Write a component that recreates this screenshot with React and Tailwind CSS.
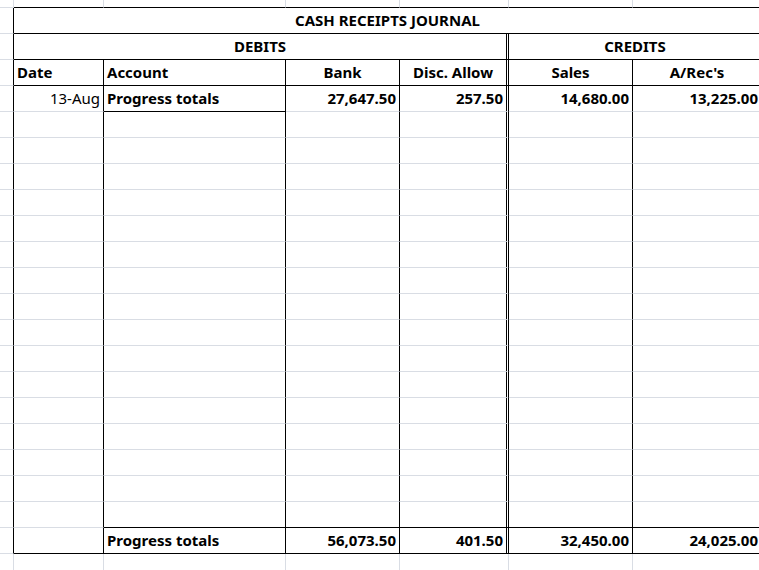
const GRAY = 'border-[#d9dde4]'
const COLS = 'grid-cols-[14px_90px_182px_114px_109px_124px_129px]'

function Cell({ cls = '', children, span = '' }) {
    return (
        <div className={`box-border h-full border-r border-b flex items-center px-[3px] overflow-hidden whitespace-nowrap ${span} ${cls}`}>
            {children}
        </div>
    )
}

// right border per data column: Date, Account, Bank, Disc (double), Sales, A/Rec
const RB = ['border-r-black', 'border-r-black', 'border-r-black', 'border-r-[3px] border-r-black border-double', 'border-r-black', 'border-r-black']

function Row({ h = 'h-[26px]', children }) {
    return <div className={`grid ${COLS} ${h}`}>{children}</div>
}

function BodyRow({ values = [], bottomBlack = [] }) {
    return (
        <Row>
            <Cell cls={`${GRAY} border-r-black`} />
            {RB.map((rb, i) => (
                <Cell key={i} cls={`${GRAY} ${rb} ${bottomBlack.includes(i) ? 'border-b-black' : ''} ${values[i]?.cls || ''}`}>
                    {values[i]?.text}
                </Cell>
            ))}
        </Row>
    )
}

export default function App() {
    const blanks = Array.from({ length: 16 })
    return (
        <div className="w-[759px] h-[570px] overflow-hidden bg-white text-black font-['Lato','Liberation_Sans',sans-serif] text-[15px]">
            <div className="w-[762px]">
                {/* top partial row */}
                <Row h="h-[8px]">
                    <Cell cls={GRAY} />
                    {RB.map((_, i) => <Cell key={i} cls={`${GRAY} border-b-black`} />)}
                </Row>

                {/* Title */}
                <Row>
                    <Cell cls={`${GRAY} border-r-black`} />
                    <Cell span="col-span-6" cls="border-black justify-center font-bold">CASH RECEIPTS JOURNAL</Cell>
                </Row>

                {/* Debits / Credits */}
                <Row>
                    <Cell cls={`${GRAY} border-r-black`} />
                    <Cell span="col-span-4" cls="border-b-black border-r-[3px] border-r-black border-double justify-center font-bold">DEBITS</Cell>
                    <Cell span="col-span-2" cls="border-black justify-center font-bold">CREDITS</Cell>
                </Row>

                {/* Column headers */}
                <BodyRow
                    bottomBlack={[0, 1, 2, 3, 4, 5]}
                    values={[
                        { text: 'Date', cls: 'font-bold' },
                        { text: 'Account', cls: 'font-bold' },
                        { text: 'Bank', cls: 'font-bold justify-center' },
                        { text: 'Disc. Allow', cls: 'font-bold justify-center' },
                        { text: 'Sales', cls: 'font-bold justify-center' },
                        { text: "A/Rec's", cls: 'font-bold justify-center' },
                    ]}
                />

                {/* First line */}
                <BodyRow
                    bottomBlack={[1]}
                    values={[
                        { text: '13-Aug', cls: 'justify-end' },
                        { text: 'Progress totals', cls: 'font-bold' },
                        { text: '27,647.50', cls: 'font-bold justify-end' },
                        { text: '257.50', cls: 'font-bold justify-end' },
                        { text: '14,680.00', cls: 'font-bold justify-end' },
                        { text: '13,225.00', cls: 'font-bold justify-end' },
                    ]}
                />

                {blanks.map((_, i) => (
                    <BodyRow key={i} bottomBlack={i === blanks.length - 1 ? [1, 2, 3, 4, 5] : []} />
                ))}

                {/* Totals */}
                <BodyRow
                    bottomBlack={[0, 1, 2, 3, 4, 5]}
                    values={[
                        {},
                        { text: 'Progress totals', cls: 'font-bold' },
                        { text: '56,073.50', cls: 'font-bold justify-end' },
                        { text: '401.50', cls: 'font-bold justify-end' },
                        { text: '32,450.00', cls: 'font-bold justify-end' },
                        { text: '24,025.00', cls: 'font-bold justify-end' },
                    ]}
                />

                <Row>
                    <Cell cls={GRAY} />
                    {RB.map((_, i) => <Cell key={i} cls={GRAY} />)}
                </Row>
            </div>
        </div>
    )
}
